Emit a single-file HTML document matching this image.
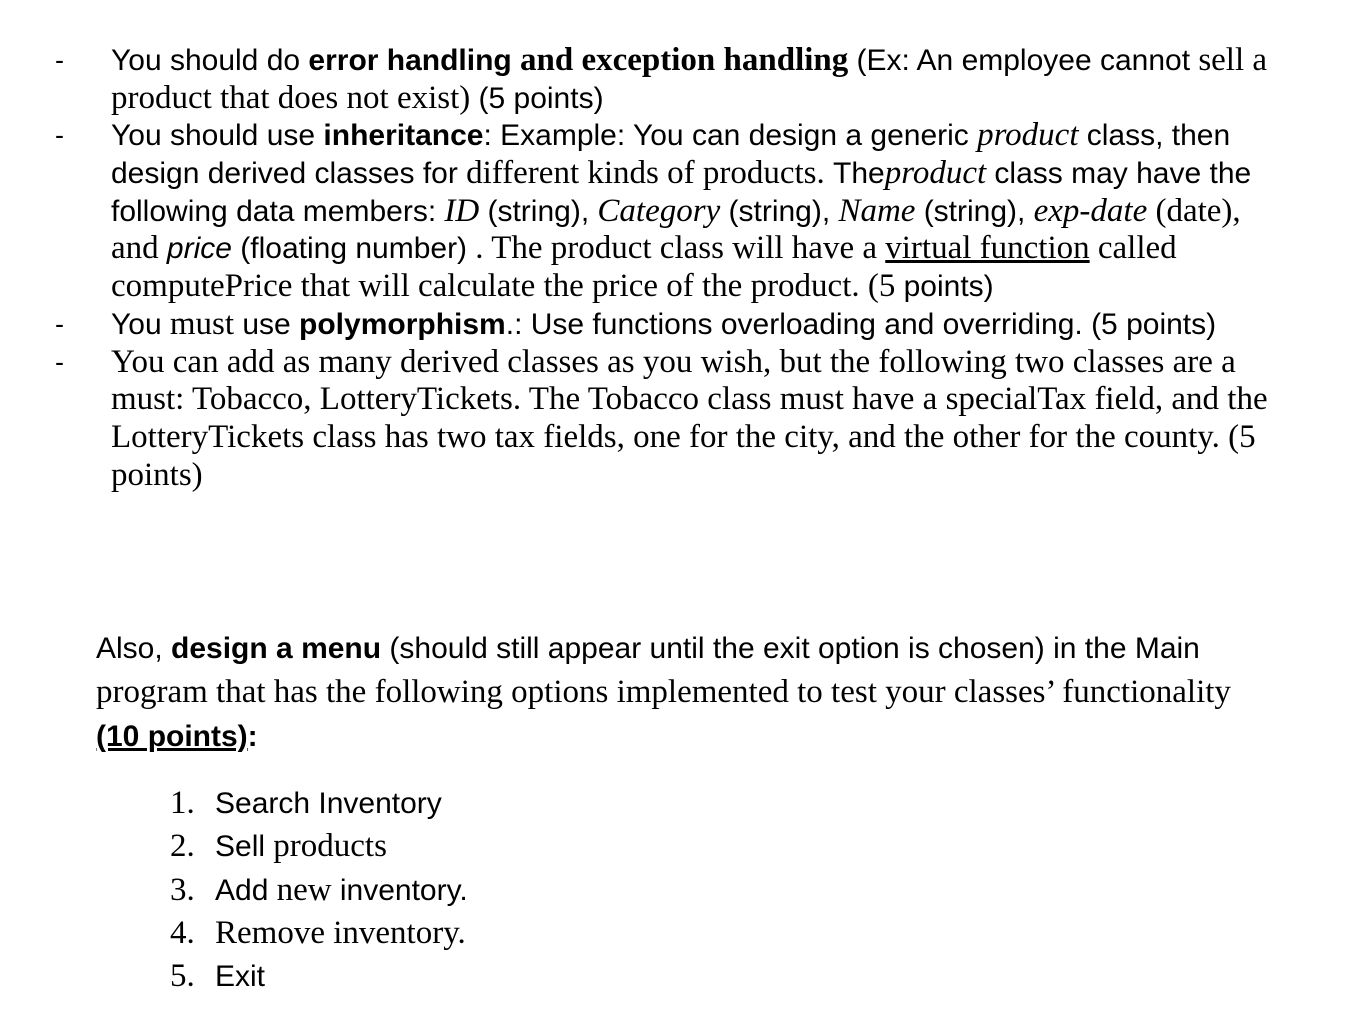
<!DOCTYPE html>
<html><head><meta charset="utf-8"><style>
body{margin:0;background:#fff;width:1364px;height:1020px;position:relative;overflow:hidden;color:#000}
.l{position:absolute;white-space:nowrap;font-family:"Liberation Serif",serif;font-size:33px;line-height:38px}
.s{font-family:"Liberation Sans",sans-serif;font-size:30px;letter-spacing:0}
.d{position:absolute;left:55px;font-family:"Liberation Sans",sans-serif;font-size:27px;line-height:38px}
i{font-style:italic}
</style></head><body>
<div class="d" style="top:41px">-</div>
<div class="d" style="top:116px">-</div>
<div class="d" style="top:305px">-</div>
<div class="d" style="top:343px">-</div>

<div class="l" style="left:111px;top:41px"><span class="s">You should do <b>error handling</b></span> <b>and exception handling</b> <span class="s">(Ex: An employee cannot</span> sell a</div>
<div class="l" style="left:111px;top:79px">product that does not exist) <span class="s">(5 points)</span></div>
<div class="l" style="left:111px;top:116px"><span class="s">You should use <b>inheritance</b>: Example: You can design a generic</span> <i>product</i> <span class="s">class, then</span></div>
<div class="l" style="left:111px;top:154px"><span class="s">design derived classes for</span> different kinds of products. <span class="s">The</span><i>product</i> <span class="s">class may have the</span></div>
<div class="l" style="left:111px;top:192px"><span class="s">following data members:</span> <i>ID</i> <span class="s">(string),</span> <i>Category</i> <span class="s">(string),</span> <i>Name</i> <span class="s">(string),</span> <i>exp-date</i> (date),</div>
<div class="l" style="left:111px;top:229px">and <span class="s"><i>price</i> (floating number)</span> . The product class will have a <u>virtual function</u> called</div>
<div class="l" style="left:111px;top:267px">computePrice that will calculate the price of the product. (5 <span class="s">points)</span></div>
<div class="l" style="left:111px;top:305px"><span class="s">You</span> must <span class="s">use <b>polymorphism</b>.: Use functions overloading and overriding. (5 points)</span></div>
<div class="l" style="left:111px;top:343px">You can add as many derived classes as you wish, but the following two classes are a</div>
<div class="l" style="left:111px;top:380px">must: Tobacco, LotteryTickets. The Tobacco class must have a specialTax field, and the</div>
<div class="l" style="left:111px;top:418px">LotteryTickets class has two tax fields, one for the city, and the other for the county. (5</div>
<div class="l" style="left:111px;top:456px">points)</div>

<div class="l" style="left:96px;top:629px"><span class="s">Also, <b>design a menu</b> (should still appear until the exit option is chosen) in the Main</span></div>
<div class="l" style="left:96px;top:673px">program that has the following options implemented to test your classes’ functionality</div>
<div class="l" style="left:96px;top:717px"><span class="s"><b><u>(10 points)</u>:</b></span></div>

<div class="l" style="left:170px;top:784px">1. <span class="s" style="margin-left:12px">Search Inventory</span></div>
<div class="l" style="left:170px;top:827px">2. <span class="s" style="margin-left:12px">Sell</span> products</div>
<div class="l" style="left:170px;top:871px">3. <span class="s" style="margin-left:12px">Add</span> new <span class="s">inventory.</span></div>
<div class="l" style="left:170px;top:914px">4. <span style="margin-left:12px">Remove inventory.</span></div>
<div class="l" style="left:170px;top:957px">5. <span class="s" style="margin-left:12px">Exit</span></div>
</body></html>
